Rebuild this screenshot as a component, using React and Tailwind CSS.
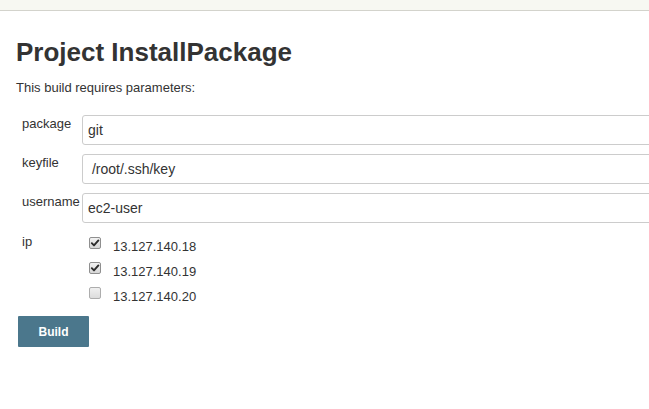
import React from "react";

function Check({ checked }) {
  return (
    <div
      className={
        "w-[12px] h-[12px] rounded-[2px] border flex items-center justify-center shrink-0 " +
        (checked
          ? "border-[#8f8f8f] bg-gradient-to-b from-[#f2f2f2] to-[#d6d6d6]"
          : "border-[#adadad] bg-gradient-to-b from-[#f0f0f0] to-[#dcdcdc]")
      }
    >
      {checked && (
        <svg width="10" height="10" viewBox="0 0 10 10">
          <path d="M1.8 5.2 L4 7.4 L8.4 2.4" fill="none" stroke="#2b2b2b" strokeWidth="1.9" strokeLinecap="round" strokeLinejoin="round" />
        </svg>
      )}
    </div>
  );
}

function TextRow({ label, value }) {
  return (
    <div className="flex items-start">
      <div className="w-[66px] pl-[6px] pt-px text-[13px] leading-4 shrink-0">{label}</div>
      <input
        readOnly
        defaultValue={value}
        className="w-[600px] h-[30px] shrink-0 border border-[#cccccc] rounded-[3px] px-[5px] text-[14px] text-[#333] bg-white outline-none font-['Liberation_Sans',Arial,sans-serif]"
      />
    </div>
  );
}

export default function App() {
  const ips = [
    { ip: "13.127.140.18", checked: true },
    { ip: "13.127.140.19", checked: true },
    { ip: "13.127.140.20", checked: false },
  ];
  return (
    <div className="w-full min-h-screen overflow-hidden bg-white text-[#333] font-['Liberation_Sans',Arial,sans-serif]">
      <div className="h-[11px] bg-[#f7f8f2] border-b border-[#d3d3cc]" />
      <div className="pl-4">
        <h1 className="mt-[26px] text-[26px] leading-[30px] font-bold">Project InstallPackage</h1>
        <p className="mt-[13px] text-[13px] leading-4">This build requires parameters:</p>
        <div className="mt-[19px] flex flex-col gap-[9px]">
          <TextRow label="package" value="git" />
          <TextRow label="keyfile" value=" /root/.ssh/key" />
          <TextRow label="username" value="ec2-user" />
          <div className="flex items-start">
            <div className="w-[66px] pl-[6px] pt-[2px] text-[13px] leading-4 shrink-0">ip</div>
            <div className="pl-[7px] flex flex-col">
              {ips.map((r) => (
                <div key={r.ip} className="h-[25px] flex items-start gap-[12px]">
                  <div className="mt-[5px]">
                    <Check checked={r.checked} />
                  </div>
                  <span className="mt-[7px] text-[13px] leading-4">{r.ip}</span>
                </div>
              ))}
            </div>
          </div>
        </div>
        <button className="mt-[9px] ml-[2px] w-[71px] h-[31px] bg-[#4b778c] text-white text-[12px] font-bold rounded-[1px] flex items-center justify-center">
          Build
        </button>
      </div>
    </div>
  );
}
